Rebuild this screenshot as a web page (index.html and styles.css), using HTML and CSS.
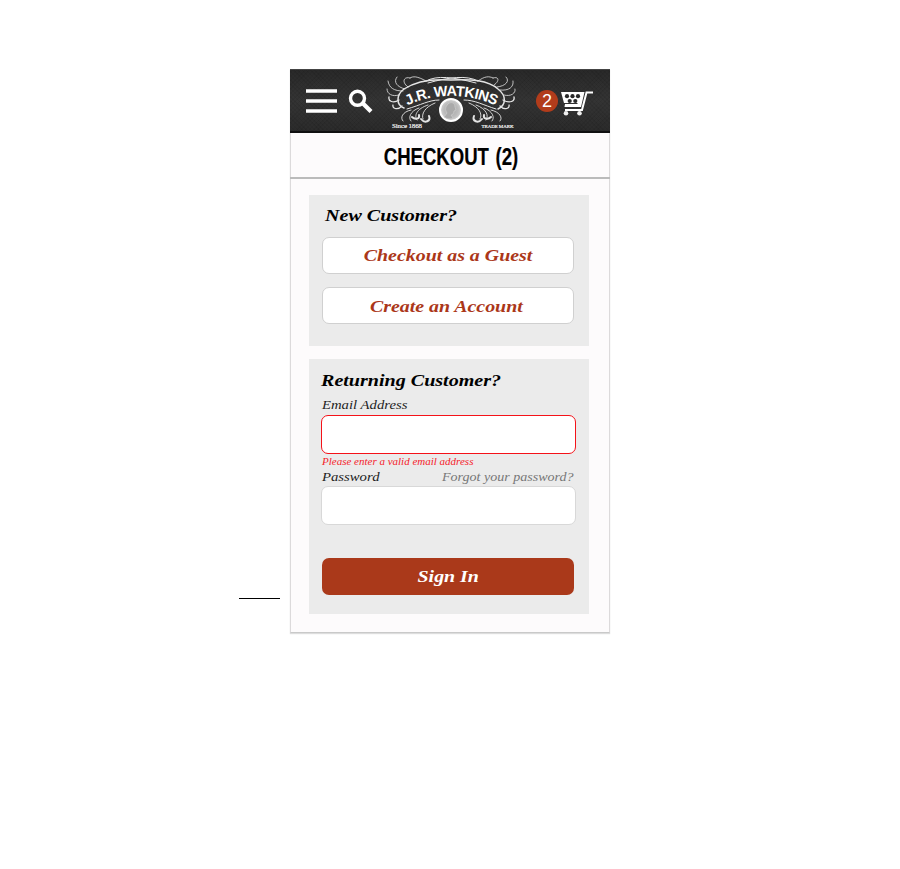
FILE: index.html
```html
<!DOCTYPE html>
<html lang="en">
<head>
<meta charset="utf-8">
<title>Checkout</title>
<link rel="stylesheet" href="styles.css">
</head>
<body>
<div class="stage">
  <div class="rule"></div>
  <main class="phone">
    <header class="bar">
      <svg class="menu" width="32" height="26" viewBox="0 0 32 26"><path d="M0 3h31M0 13h31M0 23h31" stroke="#fff" stroke-width="3.6"/></svg>
      <svg class="search" width="26" height="26" viewBox="0 0 26 26" fill="none" stroke="#fff"><circle cx="9.500" cy="9.300" r="7" stroke-width="3.400"/><path d="M14.500 14l8.500 8.500" stroke-width="4.200"/></svg>
      <svg class="logo" width="136" height="62" viewBox="0 0 136 62" fill="none" stroke="#e4e4e4" stroke-linecap="round">
        <defs>
          <path id="arc" d="M24.500 36.500C50 23.500 86 23.500 115 37.500"/>
          <radialGradient id="coin"><stop offset="0" stop-color="#aaa"/><stop offset=".65" stop-color="#bbb"/><stop offset="1" stop-color="#d5d5d5"/></radialGradient>
        </defs>
        <path stroke-width="1.500" d="M21 39C13 36 13 26 21 20C36 10 54 10 68 11C88 10 105 11 115 20C124 27 123 36 115 40"/>
        <path stroke-width="1" d="M43 12C54 6 70 8 93 14M95 12C84 6 66 8 45 14M24 40C38 36 46 31 56 31M113 40C100 36 92 31 81 31"/>
        <path stroke-width=".8" d="M20 22C11 22 6 19 5 12M22 20C14 18 10 13 14 8M25 18C18 13 21 7 27 9M43 12C34 7 30 7 27 9M16 26C9 28 4 25 4 20M117 21C126 22 131 18 130 12M114 18C123 17 127 12 123 8M111 16C117 12 116 7 110 9M95 12C102 7 106 7 110 9M121 26C128 28 133 24 132 20"/>
        <path stroke-width="1.300" d="M16 31C10 35 5 32 6 28M19 37C14 42 9 39 10 36M120 31C127 35 132 32 131 28M117 37C122 42 127 39 126 36"/>
        <path stroke-width=".9" d="M28 41C19 43 17 49 20 52M36 39C27 42 25 49 28 52M45 36C33 40 31 47 34 51M52 34C42 38 38 45 40 50M108 41C117 43 120 49 117 52M101 39C110 42 112 49 109 52M93 36C104 40 106 47 103 51M86 34C96 38 100 45 97 50"/>
        <path stroke-width="2" d="M38 50C42 55 48 52 46 47M99 50C95 55 89 52 91 47M29 48C32 51 37 50 36 46M108 48C105 51 100 50 101 46"/>
        <circle cx="68" cy="41" r="11" fill="url(#coin)" stroke="#fff" stroke-width="2"/>
        <path d="M65 35c3-3 7-1 7 3l1 3-2 1c0 3-2 4-3 4l2 3c-4 2-7 0-9-1l3-4c-2-3-2-6 1-9z" fill="#aaa" stroke="#ccc" stroke-width=".7"/>
        <text class="brand"><textPath href="#arc" textLength="91">J.R. WATKINS</textPath></text>
        <text class="small" x="9" y="58.500" textLength="30">Since 1868</text>
        <text class="small mark" x="98.500" y="58.500" textLength="32">TRADE MARK</text>
      </svg>
      <span class="count">2</span>
      <svg class="cart" width="33" height="26" viewBox="0 0 33 26"><path d="M0 2h23.500l-3.500 15H3.500L4 14h12.500V13H3z" fill="#fff"/><path d="M32 2.500h-6.500L21 20H4" fill="none" stroke="#fff" stroke-width="2"/><g fill="#292929"><circle cx="6" cy="6.200" r="2.100"/><circle cx="11.500" cy="6.200" r="2.100"/><circle cx="17" cy="6.200" r="2.100"/><circle cx="8.700" cy="11" r="2.100"/><circle cx="14.300" cy="11" r="2.100"/></g><circle cx="5" cy="23.200" r="2.300" fill="#eee"/><circle cx="18.500" cy="23.200" r="2.300" fill="#eee"/></svg>
    </header>
    <h1><span>CHECKOUT (2)</span></h1>
    <section class="card new">
      <h2><span class="wide left">New Customer?</span></h2>
      <button class="choice"><span class="wide">Checkout as a Guest</span></button>
      <button class="choice low"><span class="wide">Create an Account</span></button>
    </section>
    <section class="card returning">
      <h2><span class="wide left">Returning Customer?</span></h2>
      <label for="email"><span class="field-name">Email Address</span></label>
      <input id="email" class="invalid" type="text">
      <p class="error"><span>Please enter a valid email address</span></p>
      <div class="row"><label for="pw"><span class="field-name">Password</span></label><a><span class="forgot">Forgot your password?</span></a></div>
      <input id="pw" type="password">
      <button class="submit"><span class="wide">Sign In</span></button>
    </section>
  </main>
</div>
</body>
</html>
```
FILE: styles.css
```css
* { box-sizing: border-box; }
body { margin: 0; background: #fff; font-family: "Liberation Serif", Georgia, serif; font-style: italic; }
.stage { display: flex; align-items: flex-start; padding: 69px 0 0 239px; height: 869px; }
.rule { width: 41px; height: 1px; margin: 529px 10px 0 0; background: #000; }
.phone { width: 320px; height: 564px; background: #fdfbfc; border: 1px solid #dcdadb; border-top: 0; border-bottom-color: #c9c9c9; box-shadow: 0 1px 1px #ddd; }
.bar { display: flex; align-items: flex-start; height: 64px; margin: 0 -1px; padding-left: 16px; border-top: 1px solid #444; border-bottom: 2px solid #101010;
  background: repeating-linear-gradient(45deg, rgba(0,0,0,.07) 0 1px, transparent 1px 3px), repeating-linear-gradient(-45deg, rgba(0,0,0,.06) 0 1px, transparent 1px 3px), linear-gradient(#292929, #343434 50%, #2b2b2b); }
.menu { margin-top: 18px; flex: none; }
.search { margin: 19px 0 0 10px; flex: none; }
.logo { margin: -1px 0 0 9px; flex: none; }
.brand { font: bold 14.5px "Liberation Sans", Arial, sans-serif; fill: #fff; stroke: none; }
.small { font: 7px "Liberation Serif", serif; fill: #fff; stroke: #fff; stroke-width: .15; }
.mark { font-size: 5px; }
.count { width: 22px; height: 22px; margin: 20px 0 0 17px; border-radius: 50%; background: #b23c1b; color: #fff; font: 18px/23px "Liberation Sans", Arial, sans-serif; text-align: center; flex: none; }
.cart { margin: 20px 0 0 3px; flex: none; }
h1 { margin: 0 -1px; height: 46px; border-bottom: 2px solid #bbb; font: bold 24px/48px "Liberation Sans", Arial, sans-serif; color: #000; display: flex; justify-content: center; }
h1 span { transform: scaleX(.773); margin-left: 2px; word-spacing: 2px; -webkit-text-stroke: .2px #000; }
h2 { margin: 0; font-size: 17px; line-height: 22px; height: 20px; color: #000; }
.card { width: 280px; margin-left: 18px; background: #ebebeb; }
.new { margin-top: 16px; height: 151px; padding: 10px 15px 0 13px; }
.new h2 { padding-left: 3px; margin-bottom: 12px; }
span { display: inline-block; white-space: nowrap; }
.wide { transform: scaleX(1.17); }
.left { transform: scaleX(1.18); transform-origin: left; }
.field-name { transform: scaleX(1.09); transform-origin: left; }
.forgot { transform: scaleX(1.04); transform-origin: right; }
button { display: block; width: 252px; height: 37px; border-radius: 7px; font: italic bold 17px/35px "Liberation Serif", serif; padding: 0; }
.choice { border: 1px solid #d0d0d0; background: #fff; color: #ab3719; margin-bottom: 13px; }
.low { padding: 1px 4px 0 0; }
.returning { margin-top: 13px; height: 255px; padding: 12px 13px 0 12px; }
label, a { display: block; font-size: 13.5px; line-height: 16px; height: 16px; color: #222; padding-left: 1px; }
.returning h2 { margin-bottom: 6px; line-height: 20px; }
input { display: block; width: 255px; height: 39px; border: 1px solid #d8d8d8; border-radius: 7px; background: #fff; padding: 0 10px; }
.invalid { margin-top: 2px; border-color: #f41219; }
.error { margin: 1px 0 0 1px; font-size: 11px; line-height: 13px; height: 13px; color: #f5222a; }
.row { display: flex; justify-content: space-between; padding-right: 2px; height: 18px; padding-top: 1px; }
.row a { color: #777; }
.submit { margin: 33px 0 0 1px; border: 0; background: #aa391a; color: #fff; }
```
